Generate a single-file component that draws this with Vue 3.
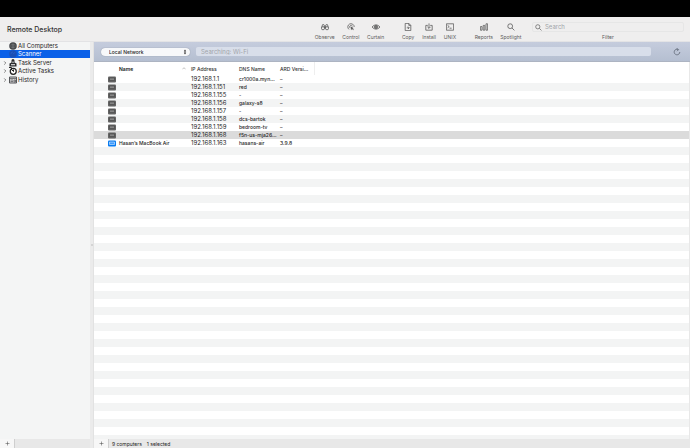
<script setup>
import { ref } from 'vue'

const places = [
  { name: 'All Computers', icon: 'globe' },
  { name: 'Scanner', icon: 'scan', active: true },
  { name: 'Task Server', icon: 'server', branch: true },
  { name: 'Active Tasks', icon: 'clock', branch: true },
  { name: 'History', icon: 'history', branch: true }
]

const groups = [
  { id: 'view', tools: ['Observe', 'Control', 'Curtain'] },
  { id: 'send', tools: ['Copy', 'Install', 'UNIX'] },
  { id: 'find', tools: ['Reports', 'Spotlight'] }
]

const computers = [
  { name: '', ip: '192.168.1.1', dns: 'cr1000a.myn…', ard: '–' },
  { name: '', ip: '192.168.1.151', dns: 'red', ard: '–' },
  { name: '', ip: '192.168.1.155', dns: '-', ard: '–' },
  { name: '', ip: '192.168.1.156', dns: 'galaxy-s8', ard: '–' },
  { name: '', ip: '192.168.1.157', dns: '-', ard: '–' },
  { name: '', ip: '192.168.1.158', dns: 'dcs-bartok', ard: '–' },
  { name: '', ip: '192.168.1.159', dns: 'bedroom-tv', ard: '–' },
  { name: '', ip: '192.168.1.168', dns: 'f5n-us-mja26…', ard: '–', selected: true },
  { name: 'Hasan’s MacBook Air', ip: '192.168.1.163', dns: 'hasans-air', ard: '3.9.8', online: true }
]

const search = ref('')
const network = ref('Local Network')
const scan = ref('')
</script>

<template>
  <div class="app">
    <div class="menubar"></div>
    <header class="toolbar">
      <h1>Remote Desktop</h1>
      <nav class="tools">
        <div v-for="g in groups" :key="g.id" class="group" :class="g.id">
          <button v-for="t in g.tools" :key="t" type="button" class="tool">
            <svg viewBox="0 0 20 20" class="line">
              <template v-if="t === 'Observe'">
                <circle cx="5" cy="13" r="4" /><circle cx="15" cy="13" r="4" />
                <path d="M1.500 11 4 4h3l1.500 3v6M18.500 11 16 4h-3l-1.500 3v6M8.500 8h3M8.500 12h3" />
              </template>
              <template v-else-if="t === 'Control'">
                <path d="M5 16a8 8 0 1 1 13-6M7 12a4 4 0 1 1 7-4" />
                <path d="m9 8 1 10 2.500-3 3.500 3 1-1-3-3 3-1z" fill="currentColor" stroke="none" />
              </template>
              <template v-else-if="t === 'Curtain'">
                <path d="M0 10Q10-1 20 10 10 21 0 10z" /><circle cx="10" cy="10" r="4" />
                <circle cx="10" cy="10" r="2" fill="currentColor" />
              </template>
              <template v-else-if="t === 'Copy'">
                <path d="M3 1h9l5 5v13H3zM12 1v5h5M7 12h6M10 9l3 3-3 3" />
              </template>
              <template v-else-if="t === 'Install'">
                <path d="M7 6H2v12h16V6h-5M10 1v12M6 9.500l4 4 4-4" />
              </template>
              <template v-else-if="t === 'UNIX'">
                <path d="M1 2h18v16H1zM4 6l4 3-4 3M9 13h5" />
              </template>
              <template v-else-if="t === 'Reports'">
                <path d="M1 9h4v9H1zM8 6h4v12H8zM15 2h4v16h-4z" />
              </template>
              <template v-else>
                <circle cx="8" cy="8" r="6" /><path d="m12.500 12.500 6 6" />
              </template>
            </svg>
            <span>{{ t }}</span>
          </button>
        </div>
      </nav>
      <div class="filter">
        <div class="searchbox">
          <svg viewBox="0 0 20 20" class="line"><circle cx="8" cy="8" r="6" /><path d="m12.500 12.500 6 6" /></svg>
          <input id="filter" v-model="search" type="search" placeholder="Search" />
        </div>
        <label for="filter">Filter</label>
      </div>
    </header>

    <div class="body">
      <aside class="sidebar">
        <ul>
          <li v-for="p in places" :key="p.name" :class="{ active: p.active }">
            <svg class="chevron" viewBox="0 0 10 10"><path v-if="p.branch" d="m3 1 4 4-4 4" /></svg>
            <svg class="icon" viewBox="0 0 16 16">
              <template v-if="p.icon === 'globe'">
                <circle cx="8" cy="8" r="7.500" fill="#3f4144" />
                <path d="M1 8h14M8 1v14M3 4q5 3 10 0M3 12q5-3 10 0" fill="none" stroke="#8b8d90" />
              </template>
              <template v-else-if="p.icon === 'scan'">
                <circle cx="8" cy="8" r="7.500" fill="#1b50b5" />
                <path d="M8 8 13 4M4 8a4 4 0 0 1 4-4" fill="none" stroke="#2c68d4" />
              </template>
              <template v-else-if="p.icon === 'server'">
                <path d="M5 3a3 3 0 0 1 6 0v4l4 2v6H1V9l4-2z" fill="#292a2c" />
                <path d="M4 11.500h8M8 5v3" stroke="#fff" stroke-width="2" />
              </template>
              <template v-else-if="p.icon === 'clock'">
                <circle cx="8.500" cy="8.500" r="6" fill="#fff" stroke="#222" stroke-width="2.500" />
                <path d="M4 4l5 5V5M0 1h5v5" fill="none" stroke="#222" stroke-width="2" />
              </template>
              <template v-else>
                <path d="M1 2h14v12H1z" fill="#d5d6d7" stroke="#55575a" stroke-width="2" />
                <path d="M1 5h14M3 8h5M3 11h5M10 8h3v4h-3z" fill="none" stroke="#55575a" stroke-width="1.500" />
              </template>
            </svg>
            <a href="#">{{ p.name }}</a>
          </li>
        </ul>
        <footer class="foot"><button type="button" class="add" aria-label="Add list"><svg viewBox="0 0 10 10"><path d="M5 1v8M1 5h8" /></svg></button></footer>
      </aside>
      <div class="divider"><i></i></div>
      <main class="content">
        <form class="scanbar" @submit.prevent>
          <div class="select">
            <select v-model="network" aria-label="Scan range"><option>Local Network</option></select>
            <svg viewBox="0 0 6 10"><path d="M3 1 5 4H1zM3 9 1 6h4z" /></svg>
          </div>
          <input v-model="scan" class="scan" type="text" aria-label="Scan" placeholder="Searching: Wi-Fi" />
          <button type="submit" class="reload" aria-label="Refresh">
            <svg viewBox="0 0 20 20" class="line"><path d="M17 10a7 7 0 1 1-4-6.300M9 1l5 3-4 4" /></svg>
          </button>
        </form>
        <div class="listing">
          <table>
            <colgroup><col class="c-icon" /><col class="c-name" /><col class="c-ip" /><col class="c-dns" /><col class="c-ard" /><col /></colgroup>
            <thead>
              <tr>
                <th></th>
                <th class="name"><span class="sorted">Name<svg viewBox="0 0 10 6"><path d="m1 5 4-4 4 4" /></svg></span></th>
                <th>IP Address</th><th>DNS Name</th><th>ARD Versi…</th><th></th>
              </tr>
            </thead>
            <tbody>
              <tr v-for="c in computers" :key="c.ip" :class="{ selected: c.selected }">
                <td class="device">
                  <svg viewBox="0 0 16 14" :class="{ online: c.online }">
                    <rect class="case" x="0" y="1" width="16" height="12" rx="2" />
                    <path class="screen" d="M3 4h10v5H3z" />
                  </svg>
                </td>
                <td>{{ c.name }}</td><td class="ip">{{ c.ip }}</td><td>{{ c.dns }}</td><td>{{ c.ard }}</td><td></td>
              </tr>
            </tbody>
          </table>
          <div class="stripes"></div>
        </div>
        <footer class="foot">
          <button type="button" class="add" aria-label="Add computers"><svg viewBox="0 0 10 10"><path d="M5 1v8M1 5h8" /></svg></button>
          <span>9 computers</span><span>1 selected</span>
        </footer>
      </main>
    </div>
  </div>
</template>

<style>
body { margin: 0; }
</style>

<style scoped>
* { box-sizing: border-box; }
.app {
  display: flex;
  flex-direction: column;
  height: 100vh;
  font: 5px/8px Inter, "Liberation Sans", sans-serif;
  color: #242424;
  background: #e9e9e9;
}
button, input, select { font: inherit; color: inherit; margin: 0; padding: 0; border: 0; background: none; outline: 0; }
svg { display: block; flex: none; }
.line { fill: none; stroke: currentColor; stroke-width: 2; }
.menubar { flex: none; height: 17px; background: #000; }
.toolbar { flex: none; display: flex; height: 25px; background: #efeeee; border-bottom: 1px solid #e3e3e5; }
h1 { flex: 1; margin: 0; padding-left: 7px; font-size: 7px; line-height: 25px; font-weight: 500; color: #333; }
.tools { display: flex; }
.group { display: flex; justify-content: space-around; }
.view { width: 77px; }
.send { width: 62px; margin-left: 10px; }
.find { width: 54px; margin-left: 11px; }
.tool { display: flex; flex-direction: column; align-items: center; padding-top: 6px; color: #5c5c5c; }
.tool svg { width: 8px; height: 8px; margin-bottom: 2px; }
.filter { display: flex; flex-direction: column; align-items: center; width: 152px; margin: 0 6px 0 7px; padding-top: 5px; color: #5c5c5c; }
.searchbox { display: flex; align-items: center; gap: 3px; width: 100%; height: 10px; padding-left: 2px; border: 1px solid #e6e6e6; border-radius: 2px; }
.searchbox svg { width: 7px; height: 7px; }
.searchbox input { flex: 1; min-width: 0; height: 8px; font-size: 6px; }
.filter label { margin-top: 1px; }
input::placeholder { color: #a1a4a9; opacity: 1; }

.body { flex: 1; display: flex; min-height: 0; }
.sidebar { flex: none; width: 90px; display: flex; flex-direction: column; background: #f4f5f5; }
ul { flex: 1; margin: 0; padding: 0; list-style: none; display: grid; grid-template-rows: 8px 8px 9px 8px 9px; align-content: start; }
li { display: flex; align-items: center; font-size: 6px; }
li.active { background: #0a60e8; color: #fff; }
li a { color: inherit; text-decoration: none; }
.chevron { width: 4px; height: 4px; margin: 0 2px 0 3px; fill: none; stroke: #666; stroke-width: 2; }
.icon { width: 8px; height: 8px; margin-right: 1px; }
.divider { flex: none; width: 4px; display: flex; align-items: center; justify-content: center; background: #ebebeb; border-right: 1px solid #e2e2e2; }
.divider i { width: 2px; height: 2px; border-radius: 1px; background: #ccc; }

.content { flex: 1; min-width: 0; display: flex; flex-direction: column; }
.scanbar { flex: none; display: flex; align-items: center; height: 20px; padding: 0 9px 0 7px; background: linear-gradient(#c5ccdd, #b5bfd1); border-bottom: 1px solid #adb4c2; }
.select { position: relative; width: 89px; height: 8px; border-radius: 4px; background: #f7f8fa; box-shadow: 0 0 1px #6f7889; }
.select select { display: block; width: 100%; height: 8px; padding-left: 8px; appearance: none; font-weight: 500; }
.select svg { position: absolute; right: 3px; top: 1px; width: 4px; height: 6px; fill: #222; pointer-events: none; }
.scan { flex: 1; min-width: 0; height: 9px; margin-left: 6px; padding-left: 5px; border-radius: 2px; background: #d8deea; font-size: 6px; }
.reload { margin-left: 22px; color: #5d6674; }
.reload svg { width: 8px; height: 8px; }

.listing { flex: 1; min-height: 0; display: flex; flex-direction: column; background: #fff; border-right: 1px solid #e8e8e8; overflow: hidden; }
table { width: 100%; table-layout: fixed; border-collapse: collapse; }
.c-icon { width: 24px; }
.c-name { width: 72px; }
.c-ip { width: 48px; }
.c-dns { width: 41px; }
.c-ard { width: 35px; }
th, td { height: 8px; padding: 0 0 0 1px; line-height: 8px; text-align: left; font-weight: 400; white-space: nowrap; }
td { font-weight: 500; }
th { height: 13px; color: #333; font-weight: 500; }
th:nth-child(5) { border-right: 1px solid #eee; }
th.name { padding-right: 4px; font-weight: 600; color: #111; }
td.ip { font-size: 6px; font-weight: 400; }
.sorted { display: flex; align-items: center; justify-content: space-between; }
.sorted svg { width: 4px; height: 3px; fill: none; stroke: #666; stroke-width: 1; }
tbody tr:nth-child(even) { background: #f3f4f4; }
tbody tr.selected { background: #dbdbdb; }
.device { padding: 0 0 0 14px; }
.device svg { width: 8px; height: 7px; }
.case { fill: #636363; }
.screen { fill: #858585; stroke: #3f3f3f; }
.online .case { fill: #087bf0; }
.online .screen { fill: #3f9cff; stroke: #fff; }
.stripes { flex: 1; background: repeating-linear-gradient(#f3f4f4 0 8px, #fff 8px 16px); }
.foot { flex: none; display: flex; align-items: center; gap: 5px; height: 9px; background: #e8e8e8; }
.add { width: 15px; height: 9px; display: grid; place-items: center; background: #f7f7f7; border-right: 1px solid #cfcfcf; }
.add svg { width: 5px; height: 5px; stroke: #444; stroke-width: 1; fill: none; }
.content .foot .add { margin-right: -2px; }
</style>
